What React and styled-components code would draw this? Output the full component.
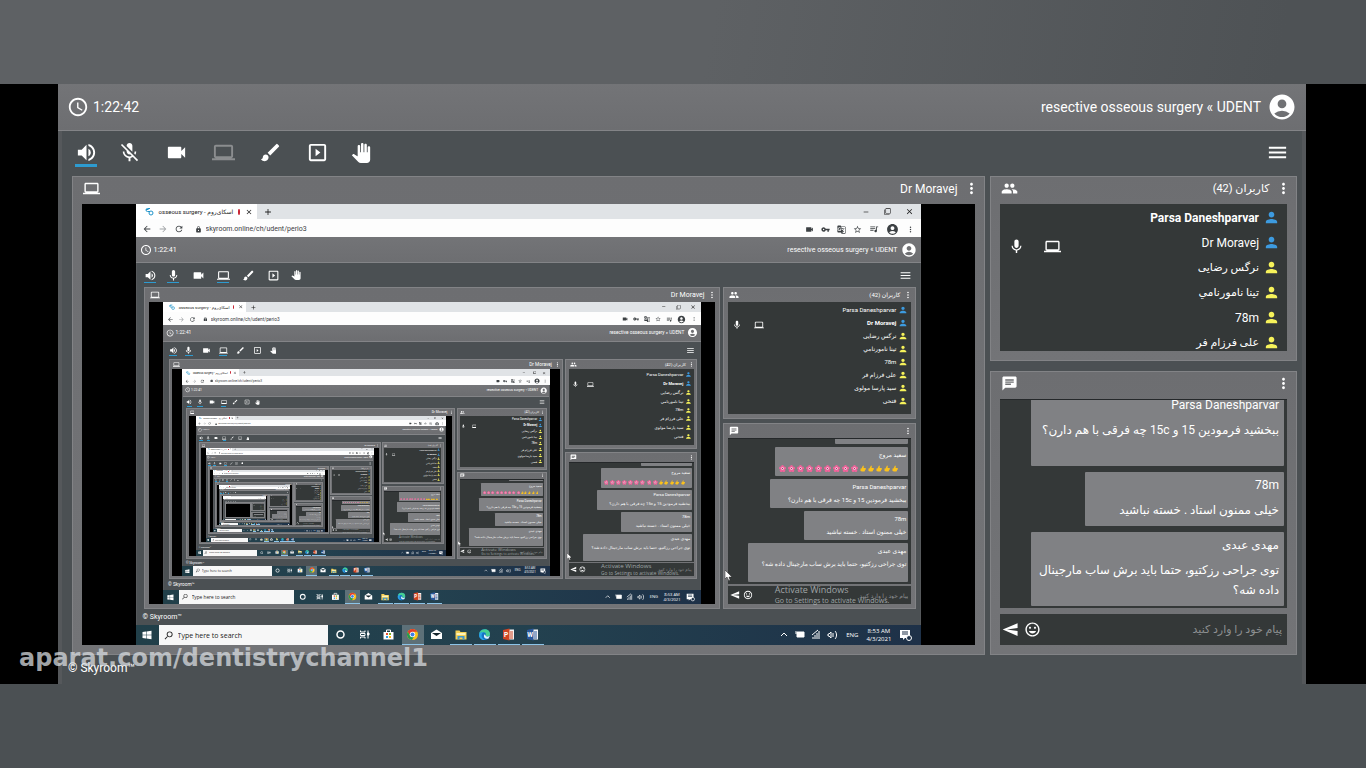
import React from "react"
import styled, { createGlobalStyle, css, ThemeProvider } from "styled-components"
import {
  MdAccessTime,
  MdAccountCircle,
  MdAdd,
  MdArrowBack,
  MdArrowForward,
  MdBrush,
  MdChat,
  MdClose,
  MdComputer,
  MdFilterNone,
  MdGroup,
  MdGTranslate,
  MdInsertEmoticon,
  MdLock,
  MdMenu,
  MdMic,
  MdMicOff,
  MdMoreVert,
  MdPanTool,
  MdPerson,
  MdQueueMusic,
  MdRefresh,
  MdRemove,
  MdSearch,
  MdSend,
  MdSlideshow,
  MdStarBorder,
  MdVideocam,
  MdVolumeUp,
  MdVpnKey
} from "react-icons/md"

const GlobalStyle = createGlobalStyle`
  * {
    box-sizing: border-box;
  }
  body {
    margin: 0;
    font-family: Roboto, "DejaVu Sans", sans-serif;
    color: #fff;
    background: #4b5053;
  }
  button {
    display: flex;
    align-items: center;
    justify-content: center;
    padding: 0;
    border: 0;
    background: none;
    color: inherit;
    font: inherit;
    cursor: pointer;
  }
  svg {
    display: block;
    flex: none;
  }
`

// the live room and the rooms inside the shared screen use two densities
const full = {
  edge: 4,
  header: 47,
  headerPad: 9,
  headerFont: 14,
  clock: 22,
  avatar: 30,
  toolbar: 45,
  toolbarPad: "0 13px 2px 4px",
  tool: 47,
  toolEnd: 40,
  toolIcon: 23,
  underline: 22,
  bodyPad: "0 5px 0 10px",
  gap: 5,
  panelGap: 10,
  side: 307,
  users: 185,
  panelPad: 9,
  panelHead: 27,
  panelIcon: 17,
  titleDrop: 4,
  titleFont: 12,
  titlePersian: 11,
  font: 12,
  persian: 11,
  chatPersian: 12,
  row: 25,
  rowPad: 7,
  personIcon: 17,
  nameGap: 4,
  line: 20,
  name: 24,
  nameMargin: 3,
  bubblePad: "1px 5px 6px 0",
  bubbleGap: 6,
  composer: 31,
  composerGap: 6,
  footer: 29,
  footerFont: 12,
  footerDrop: 4
}

const mini = {
  edge: 1,
  header: 26,
  headerPad: 4,
  headerFont: 7,
  clock: 12,
  avatar: 16,
  toolbar: 24,
  toolbarPad: "0 8px 0 3px",
  tool: 25,
  toolEnd: 21,
  toolIcon: 13,
  underline: 12,
  bodyPad: "0 4px 0 7px",
  gap: 3,
  panelGap: 4,
  side: 193,
  users: 132,
  panelPad: 4,
  panelHead: 14,
  panelIcon: 10,
  titleDrop: 1,
  titleFont: 7,
  titlePersian: 6,
  font: 6,
  persian: 6,
  chatPersian: 6,
  row: 13,
  rowPad: 3,
  personIcon: 10,
  nameGap: 2,
  line: 10,
  name: 13,
  nameMargin: 2,
  bubblePad: "1px 2px 3px",
  bubbleGap: 3,
  composer: 18,
  composerGap: 2,
  footer: 16,
  footerFont: 7,
  footerDrop: 0
}

const px = key => ({ theme }) => `${theme[key]}px`

const Page = styled.div`
  position: relative;
  height: 100vh;
  min-height: 560px;
  padding: 84px 0;
  display: flex;
  background:
    linear-gradient(100deg, #5e6164 0, #5e6164 50%, #4e5255 90%) top / 100% 50% no-repeat,
    #4b5053;
`

const Video = styled.main`
  flex: 1;
  min-width: 0;
  display: flex;
  padding: 0 60px 0 58px;
  background: #000;
`

const Watermark = styled.div`
  position: absolute;
  left: 19px;
  bottom: 96px;
  font: bold 24px/28px "DejaVu Sans", sans-serif;
  color: rgba(214, 218, 222, 0.75);
  pointer-events: none;
`

const RoomBox = styled.div`
  flex: 1;
  min-width: 0;
  min-height: 0;
  display: flex;
  flex-direction: column;
  border: solid #55585b;
  border-width: 0 ${px("edge")};
  background: #4b5053;
  color: #fff;
  font-size: ${px("font")};
`

const Header = styled.header`
  flex: none;
  height: ${px("header")};
  margin: 0 -${px("edge")};
  padding: 0 ${px("headerPad")};
  display: flex;
  align-items: center;
  justify-content: space-between;
  border-bottom: 1px solid #838487;
  background: linear-gradient(#737477, #6d6e71);
  font-size: ${px("headerFont")};
`

const HeaderItem = styled.div`
  display: flex;
  align-items: center;
  gap: ${({ theme, $wide }) => theme.nameGap + ($wide ? 2 : 0)}px;
`

const Toolbar = styled.nav`
  flex: none;
  height: ${px("toolbar")};
  padding: ${({ theme }) => theme.toolbarPad};
  display: flex;
  align-items: center;
  justify-content: space-between;
`

const Tools = styled.div`
  display: flex;
`

const Tool = styled.button`
  position: relative;
  width: ${({ theme, $end }) => ($end ? theme.toolEnd : theme.tool)}px;
  height: ${px("toolIcon")};
  ${({ $off }) => $off && "color: #8b8d8f;"}
  ${({ $on }) =>
    $on &&
    css`
      &::after {
        content: "";
        position: absolute;
        top: 100%;
        left: 50%;
        width: ${px("underline")};
        height: ${({ theme }) => (theme === full ? 3 : 1)}px;
        margin-left: -${({ theme }) => theme.underline / 2}px;
        background: #2d9bd0;
      }
    `}
`

const Body = styled.div`
  flex: 1;
  min-height: 0;
  display: flex;
  gap: ${px("gap")};
  padding: ${({ theme }) => theme.bodyPad};
`

const Side = styled.aside`
  flex: none;
  width: ${px("side")};
  display: flex;
  flex-direction: column;
  gap: ${px("panelGap")};
`

const Panel = styled.section`
  min-width: 0;
  min-height: 0;
  flex: ${({ $users, theme }) => ($users ? `none; height: ${theme.users}px` : 1)};
  display: flex;
  flex-direction: column;
  padding: 0 ${px("panelPad")} ${px("panelPad")};
  border: 1px solid #828386;
  background: linear-gradient(#6d6e71, #737477);
`

const PanelHead = styled.div`
  flex: none;
  height: ${px("panelHead")};
  display: flex;
  align-items: center;
  justify-content: space-between;
  margin-right: -${({ theme }) => theme.panelPad / 2}px;
  padding: 0 0 ${px("titleDrop")} 1px;
`

const PanelTitle = styled.div`
  display: flex;
  align-items: center;
  gap: ${({ theme }) => theme.nameGap + 1}px;
  font-size: ${({ theme, $persian }) => ($persian ? theme.titlePersian : theme.titleFont)}px;
`

const Stage = styled.div`
  flex: 1;
  min-height: 0;
  display: flex;
  justify-content: center;
  overflow: hidden;
  background: #000;
`

const UserList = styled.ul`
  flex: 1;
  min-height: 0;
  margin: 0;
  padding: 1px 0 0;
  list-style: none;
  overflow: hidden;
  background: #343838;
`

const UserRow = styled.li`
  height: ${px("row")};
  padding: 0 ${px("rowPad")};
  display: flex;
  align-items: center;
  justify-content: flex-end;
  gap: ${px("nameGap")};
  font-weight: ${({ $me }) => ($me ? "bold" : "normal")};
  font-size: ${({ theme, $persian }) => ($persian ? theme.persian : theme.font)}px;

  > svg {
    color: ${({ $host }) => ($host ? "#3d9be0" : "#f6f25a")};
  }
`

const Sharing = styled.span`
  flex: 1;
  display: flex;
  align-items: center;
  gap: ${({ theme }) => theme.panelIcon + 2}px;
  padding: ${({ theme }) => theme.nameGap * 2}px 1px 0;
`

const Messages = styled.div`
  flex: 1;
  min-height: 0;
  display: flex;
  flex-direction: column;
  align-items: flex-end;
  justify-content: flex-end;
  gap: ${px("bubbleGap")};
  padding: 0 3px 2px 0;
  overflow: hidden;
  background: #343838;
  border-top: 1px solid #25282a;
`

const Bubble = styled.article`
  flex: none;
  width: ${({ $width }) => $width}%;
  padding: ${({ theme }) => theme.bubblePad};
  border-radius: 1px;
  background: #808184;
`

const Author = styled.div`
  height: ${px("name")};
  line-height: ${px("name")};
  margin-bottom: ${px("nameMargin")};
`

const Words = styled.p`
  margin: 0;
  font-size: ${px("chatPersian")};
  line-height: ${px("line")};
  min-height: ${({ theme, $lines }) => theme.line * $lines}px;
`

const Emojis = styled.span`
  display: flex;
  direction: ltr;
  justify-content: flex-start;
  padding-left: 2px;
  gap: 2px;
  height: 10px;
  align-items: center;
`

const Composer = styled.form`
  flex: none;
  height: ${px("composer")};
  margin-top: ${px("composerGap")};
  padding: 0 ${({ theme }) => theme.nameGap + 1}px 0 2px;
  display: flex;
  align-items: center;
  gap: ${({ theme }) => theme.nameGap + 1}px;
  background: #343838;

  input {
    flex: 1;
    min-width: 0;
    padding: 0;
    border: 0;
    outline: 0;
    background: none;
    color: #fff;
    font: inherit;
    font-size: ${px("persian")};
  }
  input::placeholder {
    color: #8e9092;
  }
`

const SendIcon = styled(MdSend)`
  transform: scaleX(-1);
`

const Footer = styled.footer`
  flex: none;
  height: ${px("footer")};
  padding: 0 0 ${px("footerDrop")} 6px;
  display: flex;
  align-items: center;
  font-size: ${px("footerFont")};
`

const Desktop = styled.div`
  position: relative;
  flex: none;
  aspect-ratio: 784 / 440;
  display: flex;
  flex-direction: column;
  overflow: hidden;
  zoom: ${({ $scale }) => $scale};
`

const TabStrip = styled.div`
  flex: none;
  height: 15px;
  display: flex;
  justify-content: space-between;
  background: #e0e3e6;
  color: #222;
`

const Tab = styled.div`
  width: 121px;
  padding: 0 4px 0 9px;
  display: flex;
  align-items: center;
  gap: 5px;
  background: #fff;
  font-size: 6px;
  white-space: nowrap;

  span {
    flex: 1;
    text-align: right;
  }
`

const TabGroup = styled.div`
  display: flex;
  gap: 6px;
`

const WindowButtons = styled.div`
  display: flex;
  align-items: center;
  gap: 14px;
  padding-right: 7px;
`

const AddressBar = styled.div`
  flex: none;
  height: 18px;
  padding: 2px 6px 0;
  display: flex;
  align-items: center;
  gap: 6px;
  background: #fdfdfd;
  color: #3c4043;

  input {
    flex: 1;
    min-width: 0;
    padding: 0;
    border: 0;
    background: none;
    color: #3c4043;
    font: 7px Roboto, sans-serif;
  }
`

const Lock = styled(MdLock)`
  margin: 0 -2px 0 5px;
`

const AddressIcons = styled.div`
  display: flex;
  align-items: center;
  gap: 7px;
`

const Taskbar = styled.div`
  flex: none;
  height: 20px;
  display: flex;
  align-items: stretch;
  background: linear-gradient(90deg, #213f49, #23414f 50%, #1e3148);
  color: #fff;
`

const Start = styled.button`
  width: 23px;
`

const Search = styled.label`
  width: 169px;
  display: flex;
  align-items: center;
  gap: 4px;
  padding: 0 4px;
  margin-right: 1px;
  background: #f7f7f7;
  color: #222;

  input {
    flex: 1;
    min-width: 0;
    padding: 0;
    border: 0;
    background: none;
    font: 7px "Open Sans", sans-serif;
  }
  input::placeholder {
    color: #222;
  }
`

const SearchIcon = styled(MdSearch)`
  transform: scaleX(-1);
`

const TaskButton = styled.button`
  width: 22px;
  margin: 0 1px;
  border-bottom: 1px solid transparent;
  ${({ $open }) => $open && "border-bottom-color: #8cc4e8;"}
  ${({ $active }) => $active && "background: #5d7078;"}
`

const Tray = styled.div`
  flex: 1;
  display: flex;
  align-items: center;
  justify-content: flex-end;
  gap: 8px;
  padding-right: 9px;
  font: 6px/8px "Open Sans", sans-serif;
  text-align: center;
`

const Activate = styled.div`
  position: absolute;
  right: 32px;
  bottom: 39px;
  color: rgba(190, 194, 196, 0.8);
  font: 7px/11px "Open Sans", sans-serif;
  pointer-events: none;

  strong {
    display: block;
    font-weight: normal;
    font-size: 9px;
  }
`

const Cursor = styled.svg`
  position: absolute;
  left: 75%;
  top: 83%;
`

const hosts = ["Parsa Daneshparvar", "Dr Moravej"]
const students = ["نرگس رضایی", "تینا نامورنامي", "78m", "علی فرزام فر"]
const moreStudents = ["سید پارسا مولوی", "فتحی"]

const question = "ببخشید فرمودین 15 و 15c چه فرقی با هم دارن؟"
const thanks = "خیلی ممنون استاد . خسته نباشید"
const surgery = "توی جراحی رزکتیو، حتما باید برش ساب مارجینال داده شه؟"

const liveMessages = [
  { author: "Parsa Daneshparvar", text: question, width: 89, lines: 2 },
  { author: "78m", text: thanks, width: 70, lines: 1 },
  { author: "مهدی عبدی", text: surgery, width: 89, lines: 2 }
]

const sharedMessages = [
  { author: "", text: "", width: 41, lines: 1 },
  { author: "سعید مروج", emojis: true, width: 74, lines: 1 },
  { author: "Parsa Daneshparvar", text: question, width: 77, lines: 1 },
  { author: "78m", text: thanks, width: 58, lines: 1 },
  { author: "مهدی عبدی", text: surgery, width: 89, lines: 2 }
]

const Flower = () => (
  <svg width="7" height="7" viewBox="0 0 14 14">
    <g fill="#f0629a">
      <circle cx="7" cy="3" r="3" />
      <circle cx="11" cy="6" r="3" />
      <circle cx="9.500" cy="11" r="3" />
      <circle cx="4.500" cy="11" r="3" />
      <circle cx="3" cy="6" r="3" />
    </g>
    <circle cx="7" cy="7" r="2.500" fill="#ffe0ec" />
    <circle cx="7" cy="7" r="1.200" fill="#8d2050" />
  </svg>
)

const Thumb = () => (
  <svg width="6" height="7" viewBox="0 0 12 14">
    <path d="M1 7h2l3-6c2 0 2 2 1 5h4c1 0 1 2 0 2 1 1 0 2-1 2 0 2-1 3-2 3H4L1 12z" fill="#fcc21b" />
  </svg>
)

const WindowsIcon = () => (
  <svg width="10" height="10" viewBox="0 0 20 20" fill="#fff">
    <path d="M1 4l7-1v6.500H1zM9 2.800L19 1.500v8H9zM1 10.500h7V17l-7-1zM9 10.500h10v8L9 17.200z" />
  </svg>
)

const CortanaIcon = () => (
  <svg width="11" height="11" viewBox="0 0 22 22">
    <circle cx="11" cy="11" r="7" fill="none" stroke="#fff" strokeWidth="3" />
  </svg>
)

const TaskViewIcon = () => (
  <svg width="11" height="11" viewBox="0 0 22 22" fill="none" stroke="#fff" strokeWidth="2">
    <path d="M3 3v3h9V3M3 19v-3h9v3M3 9h9v4H3zM18 3v16" />
    <path d="M17 8h3v4h-3z" fill="#fff" />
  </svg>
)

const StoreIcon = () => (
  <svg width="13" height="13" viewBox="0 0 26 26">
    <path d="M9 8V4h8v4" fill="none" stroke="#fff" strokeWidth="2" />
    <path d="M3 8h20v15H3z" fill="#fff" />
    <path d="M8 10h4v4H8z" fill="#e8502c" />
    <path d="M14 10h4v4h-4z" fill="#78b52a" />
    <path d="M8 16h4v4H8z" fill="#2d9ce0" />
    <path d="M14 16h4v4h-4z" fill="#f6b81a" />
  </svg>
)

const ChromeIcon = () => (
  <svg width="13" height="13" viewBox="0 0 26 26">
    <circle cx="13" cy="13" r="11" fill="#fbc116" />
    <path d="M3.500 7.500A11 11 0 0 1 22.500 7.500H13L8.500 16z" fill="#e33b2e" />
    <path d="M3.500 7.500A11 11 0 0 0 12 24l5-8.500-8 1z" fill="#279b50" />
    <circle cx="13" cy="13" r="5.500" fill="#fff" />
    <circle cx="13" cy="13" r="4" fill="#3f7fe8" />
  </svg>
)

const MailIcon = () => (
  <svg width="13" height="13" viewBox="0 0 26 26">
    <path d="M2 10l11-7 11 7v12H2z" fill="#fff" />
    <path d="M4 10h18l-9 6z" fill="#15252c" />
  </svg>
)

const FolderIcon = () => (
  <svg width="12" height="12" viewBox="0 0 24 24">
    <path d="M1 3h8l2 3h12v15H1z" fill="#f4cf55" />
    <path d="M3 8h18v4H3z" fill="#fff3b8" />
    <path d="M5 14h14v7h-4v-4H9v4H5z" fill="#3f96cf" />
  </svg>
)

const EdgeIcon = () => (
  <svg width="13" height="13" viewBox="0 0 26 26">
    <circle cx="13" cy="13" r="11" fill="#1573c6" />
    <path d="M3 9C7-1 25 0 24 13c-1 5-8 5-9 2 3-4-2-8-6-6-3 0-5 1-6 4z" fill="#46cf93" />
    <path d="M9 10c-4 5-1 11 5 14C5 25 1 18 2.500 12c1-3 5-4 9-3z" fill="#2ba4e6" />
    <path d="M15 15c1 3 6 3 9 0l-3 6c-6 2-10-2-9-6 0-2 3-3 3 0z" fill="#dff2fa" />
  </svg>
)

const OfficeIcon = ({ letter, color }) => (
  <svg width="13" height="13" viewBox="0 0 26 26">
    <path d="M11 3h13v20H11z" fill="#f5f5f5" />
    <path d="M16 8h6M16 12h6M16 16h6M16 20h6" stroke={color} strokeWidth="2" />
    <path d="M2 4l13-3v24L2 22z" fill={color} />
    <text x="8" y="18" textAnchor="middle" fontFamily="Roboto" fontSize="13" fontWeight="bold" fill="#fff">
      {letter}
    </text>
  </svg>
)

const SkyroomIcon = () => (
  <svg width="9" height="9" viewBox="0 0 18 18" fill="none" stroke="#1f93c9" strokeWidth="2">
    <path d="M10 3H5a3 3 0 0 0 0 6h5" />
    <circle cx="12" cy="12" r="4" />
    <path d="M2 5h5" />
  </svg>
)

const Dot = styled.i`
  width: 6px;
  height: 6px;
  border-radius: 50%;
  background: #c8202f;
`

const TrayIcons = () => (
  <svg width="58" height="12" viewBox="0 0 58 12" fill="none" stroke="#fff">
    <path d="M1 7l3-3 3 3" />
    <path d="M17 3h7v5h-7z" fill="#fff" />
    <path d="M16 2v3" />
    <path d="M33 10V8M35 10V6M37 10V4M39 10V2M32 6l6-5" />
    <path d="M48 5h1l2-2v6l-2-2h-1zM53 4v4M55 2c2 2 2 6 0 8" />
  </svg>
)

const NoticeIcon = () => (
  <svg width="13" height="13" viewBox="0 0 13 13">
    <path d="M1 1h10v8H6l-2 2V9H1z" fill="#fff" />
    <path d="M3 3h6M3 5h6" stroke="#1e3148" />
    <circle cx="10" cy="9" r="2.500" fill="#1e3148" stroke="#fff" />
  </svg>
)

const isLatin = text => /^[\w ]+$/.test(text)

const Room = ({ theme, live, children }) => {
  const names = live ? students : [...students, ...moreStudents]
  const messages = live ? liveMessages : sharedMessages
  const dots = <MdMoreVert size={theme.panelIcon} />
  return (
    <ThemeProvider theme={theme}>
      <RoomBox>
        <Header>
          <HeaderItem>
            <MdAccessTime size={theme.clock} />
            {live ? "1:22:42" : "1:22:41"}
          </HeaderItem>
          <HeaderItem $wide>
            resective osseous surgery « UDENT
            <MdAccountCircle size={theme.avatar} />
          </HeaderItem>
        </Header>
        <Toolbar>
          <Tools>
            <Tool $end $on aria-label="Speaker">
              <MdVolumeUp size={theme.toolIcon} />
            </Tool>
            <Tool $on={!live} aria-label="Microphone">
              {live ? <MdMicOff size={theme.toolIcon} /> : <MdMic size={theme.toolIcon} />}
            </Tool>
            <Tool aria-label="Camera">
              <MdVideocam size={theme.toolIcon} />
            </Tool>
            <Tool $off={live} $on={!live} aria-label="Share screen">
              <MdComputer size={theme.toolIcon} />
            </Tool>
            <Tool aria-label="Whiteboard">
              <MdBrush size={theme.toolIcon} />
            </Tool>
            <Tool aria-label="Play media">
              <MdSlideshow size={theme.toolIcon} />
            </Tool>
            <Tool $end aria-label="Raise hand">
              <MdPanTool size={theme.toolIcon - 3} />
            </Tool>
          </Tools>
          <button aria-label="Menu">
            <MdMenu size={theme.toolIcon} />
          </button>
        </Toolbar>
        <Body>
          <Panel>
            <PanelHead>
              <MdComputer size={theme.panelIcon} />
              <PanelTitle>
                Dr Moravej
                <button aria-label="Screen options">{dots}</button>
              </PanelTitle>
            </PanelHead>
            <Stage>{children}</Stage>
          </Panel>
          <Side>
            <Panel $users>
              <PanelHead>
                <MdGroup size={theme.panelIcon} />
                <PanelTitle $persian>
                  <span dir="rtl">کاربران (42)</span>
                  <button aria-label="User options">{dots}</button>
                </PanelTitle>
              </PanelHead>
              <UserList>
                {hosts.map((name, i) => (
                  <UserRow key={name} $host $me={live ? i === 0 : i === 1}>
                    {i === 1 && (
                      <Sharing>
                        <MdMic size={theme.panelIcon} />
                        <MdComputer size={theme.panelIcon} />
                      </Sharing>
                    )}
                    {name}
                    <MdPerson size={theme.personIcon} />
                  </UserRow>
                ))}
                {names.map(name => (
                  <UserRow key={name} $persian={!isLatin(name)}>
                    <span dir="rtl">{name}</span>
                    <MdPerson size={theme.personIcon} />
                  </UserRow>
                ))}
              </UserList>
            </Panel>
            <Panel>
              <PanelHead>
                <MdChat size={theme.panelIcon} />
                <button aria-label="Chat options">{dots}</button>
              </PanelHead>
              <Messages>
                {messages.map((m, i) => (
                  <Bubble key={i} dir="rtl" $width={m.width}>
                    <Author>{m.author}</Author>
                    {m.emojis ? (
                      <Emojis>
                        {Array.from({ length: 14 }, (_, n) => (n < 9 ? <Flower key={n} /> : <Thumb key={n} />))}
                      </Emojis>
                    ) : (
                      <Words $lines={m.lines}>{m.text}</Words>
                    )}
                  </Bubble>
                ))}
              </Messages>
              <Composer onSubmit={e => e.preventDefault()}>
                <button aria-label="Send">
                  <SendIcon size={theme.panelIcon} />
                </button>
                <button type="button" aria-label="Emoji">
                  <MdInsertEmoticon size={theme.panelIcon} />
                </button>
                <input dir="rtl" aria-label="Message" placeholder="پیام خود را وارد کنید" />
              </Composer>
            </Panel>
          </Side>
        </Body>
        <Footer>© Skyroom™</Footer>
      </RoomBox>
    </ThemeProvider>
  )
}

const SharedScreen = ({ depth, scale }) => (
  <Desktop $scale={scale}>
    <TabStrip>
      <TabGroup>
        <Tab>
          <SkyroomIcon />
          <span>osseous surgery - اسکای‌روم</span>
          <Dot />
          <MdClose size={8} />
        </Tab>
        <button aria-label="New tab">
          <MdAdd size={10} />
        </button>
      </TabGroup>
      <WindowButtons>
        <MdRemove size={8} />
        <MdFilterNone size={7} />
        <MdClose size={9} />
      </WindowButtons>
    </TabStrip>
    <AddressBar>
      <MdArrowBack size={10} />
      <MdArrowForward size={10} color="#a0a3a6" />
      <MdRefresh size={10} />
      <Lock size={7} />
      <input aria-label="Address" readOnly value="skyroom.online/ch/udent/perio3" />
      <AddressIcons>
        <MdVideocam size={9} />
        <MdVpnKey size={9} />
        <MdGTranslate size={9} />
        <MdStarBorder size={9} />
        <MdQueueMusic size={10} />
        <MdAccountCircle size={13} />
        <MdMoreVert size={9} />
      </AddressIcons>
    </AddressBar>
    <Room theme={mini}>{depth > 1 && <SharedScreen depth={depth - 1} scale={0.684} />}</Room>
    <Taskbar>
      <Start aria-label="Start">
        <WindowsIcon />
      </Start>
      <Search>
        <SearchIcon size={11} />
        <input placeholder="Type here to search" aria-label="Type here to search" />
      </Search>
      <TaskButton aria-label="Cortana">
        <CortanaIcon />
      </TaskButton>
      <TaskButton aria-label="Task view">
        <TaskViewIcon />
      </TaskButton>
      <TaskButton aria-label="Store">
        <StoreIcon />
      </TaskButton>
      <TaskButton $active $open aria-label="Chrome">
        <ChromeIcon />
      </TaskButton>
      <TaskButton aria-label="Mail">
        <MailIcon />
      </TaskButton>
      <TaskButton $open aria-label="Explorer">
        <FolderIcon />
      </TaskButton>
      <TaskButton $open aria-label="Edge">
        <EdgeIcon />
      </TaskButton>
      <TaskButton $open aria-label="PowerPoint">
        <OfficeIcon letter="P" color="#d04423" />
      </TaskButton>
      <TaskButton $open aria-label="Word">
        <OfficeIcon letter="W" color="#2b579a" />
      </TaskButton>
      <Tray>
        <TrayIcons />
        <span>ENG</span>
        <span>
          8:53 AM
          <br />
          4/3/2021
        </span>
        <NoticeIcon />
      </Tray>
    </Taskbar>
    <Activate>
      <strong>Activate Windows</strong>
      Go to Settings to activate Windows.
    </Activate>
    <Cursor width="7" height="11" viewBox="0 0 7 11">
      <path d="M0 0v9l2-2 2 4 1-1-1-3h3z" fill="#fff" stroke="#222" strokeWidth="0.500" />
    </Cursor>
  </Desktop>
)

const App = () => (
  <>
    <GlobalStyle />
    <Page>
      <Video>
        <Room theme={full} live>
          <SharedScreen depth={8} scale={1} />
        </Room>
      </Video>
      <Watermark>aparat.com/dentistrychannel1</Watermark>
    </Page>
  </>
)

export default App
